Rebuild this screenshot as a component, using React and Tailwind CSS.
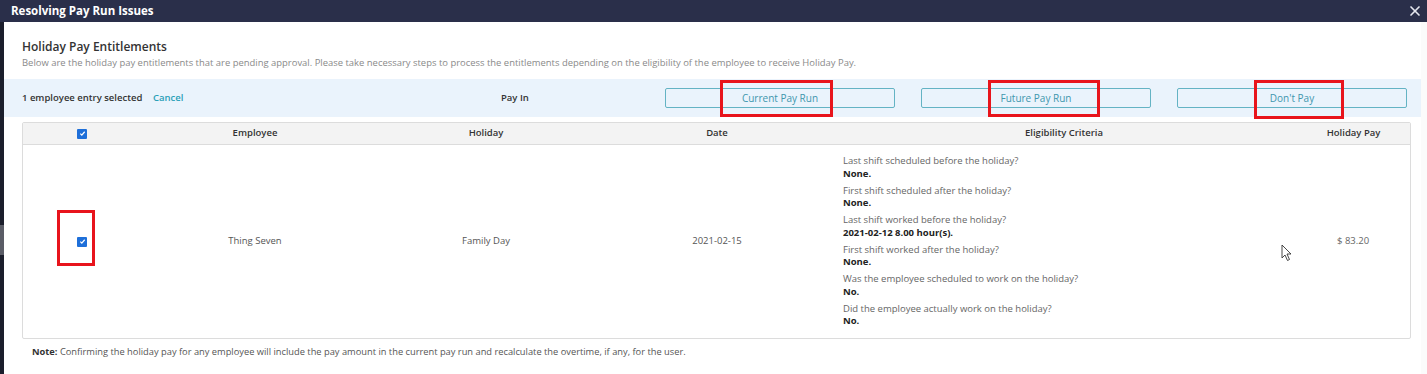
import React from 'react';
import { X } from 'lucide-react';

const criteria = [
  ['Last shift scheduled before the holiday?', 'None.'],
  ['First shift scheduled after the holiday?', 'None.'],
  ['Last shift worked before the holiday?', '2021-02-12 8.00 hour(s).'],
  ['First shift worked after the holiday?', 'None.'],
  ['Was the employee scheduled to work on the holiday?', 'No.'],
  ['Did the employee actually work on the holiday?', 'No.'],
];

const Check = () => (
  <span className="inline-flex h-[10px] w-[10px] items-center justify-center rounded-[1px] bg-[#1e6fd9]">
    <svg width="7" height="7" viewBox="0 0 8 8">
      <path d="M1.5 4.2 L3.2 5.8 L6.5 2" fill="none" stroke="white" strokeWidth="1.4" />
    </svg>
  </span>
);

const PayButton = ({ label, marked }) => (
  <div className="relative flex h-[20px] w-[230px] items-center justify-center rounded-[2px] border border-[#64b3c4] text-[10px] text-[#3f97ae]">
    {label}
    {marked && <span className={`absolute border-[3px] border-[#e8141c] ${marked}`} />}
  </div>
);

const App = () => {
  return (
    <div className="relative h-[374px] w-[1427px] overflow-hidden bg-[#1b1e2c] font-['Open_Sans',sans-serif]">
      {/* Header */}
      <div className="flex h-[22px] items-center justify-between bg-[#2a2f4a] pl-[11px] pr-[4px] text-white">
        <span className="text-[11.5px] font-bold">Resolving Pay Run Issues</span>
        <X size={16} strokeWidth={2.5} className="text-[#e5e7ef]" />
      </div>

      <div className="absolute left-0 top-[225px] h-[30px] w-[4px] bg-[#5a5c66]" />

      {/* Body */}
      <div className="ml-[4px] h-[352px] border-r-[6px] border-[#fbfbfb] bg-white">
        <div className="px-[18px] pt-[17px]">
          <h2 className="text-[12px] font-semibold leading-[16px] text-[#333]">Holiday Pay Entitlements</h2>
          <p className="mt-[1px] text-[9.45px] leading-[14px] text-[#8a8a8a]">
            Below are the holiday pay entitlements that are pending approval. Please take necessary steps to process the entitlements depending on the eligibility of the employee to receive Holiday Pay.
          </p>
        </div>

        {/* Selection bar */}
        <div className="mt-[9px] flex h-[38px] items-center bg-[#eaf3fc] pl-[18px] pr-[7px] text-[9.5px]">
          <span className="w-[131px] font-semibold text-[#333]">1 employee entry selected</span>
          <span className="w-[348px] font-semibold text-[#2aa0b8]">Cancel</span>
          <span className="w-[164px] font-semibold text-[#333]">Pay In</span>
          <div className="flex gap-[26px]">
            <PayButton label="Current Pay Run" marked="left-[54px] top-[-9px] h-[37px] w-[113px]" />
            <PayButton label="Future Pay Run" marked="left-[66px] top-[-9px] h-[37px] w-[112px]" />
            <PayButton label="Don't Pay" marked="left-[76px] top-[-9px] h-[39px] w-[90px]" />
          </div>
        </div>

        {/* Table */}
        <div className="ml-[18px] mr-[10px] mt-[5px] rounded-[2px] border border-[#dcdcdc] text-[9.5px]">
          <div className="flex h-[22px] items-center border-b border-[#dcdcdc] bg-[#f3f3f3] font-semibold text-[#333]">
            <div className="flex w-[118px] justify-center"><Check /></div>
            <div className="w-[228px] text-center">Employee</div>
            <div className="w-[234px] text-center">Holiday</div>
            <div className="w-[228px] text-center">Date</div>
            <div className="w-[466px] text-center">Eligibility Criteria</div>
            <div className="flex-1 text-center">Holiday Pay</div>
          </div>
          <div className="flex h-[193px] items-center text-[#555]">
            <div className="relative flex w-[118px] justify-center">
              <Check />
              <span className="absolute left-[34px] top-[-27px] h-[56px] w-[38px] border-[3px] border-[#e8141c]" />
            </div>
            <div className="w-[228px] text-center">Thing Seven</div>
            <div className="w-[234px] text-center">Family Day</div>
            <div className="w-[228px] text-center">2021-02-15</div>
            <div className="flex w-[466px] flex-col gap-[4.6px] pl-[12px]">
              {criteria.map(([q, a]) => (
                <div key={q} className="leading-[12.5px]">
                  <div className="text-[#666]">{q}</div>
                  <div className="font-bold text-[#222]">{a}</div>
                </div>
              ))}
            </div>
            <div className="relative flex-1 pl-[40px] text-[#666]">
              $ 83.20
              <svg className="absolute left-[-16px] top-[10px]" width="12" height="18" viewBox="0 0 12 18">
                <path d="M1 1 L1 14 L4 11 L6.5 16.5 L8.5 15.5 L6 10 L10 10 Z" fill="white" stroke="#333" strokeWidth="0.9" />
              </svg>
            </div>
          </div>
        </div>

        <p className="mt-[6px] pl-[28px] text-[9.3px] text-[#555]">
          <span className="font-bold text-[#333]">Note:</span> Confirming the holiday pay for any employee will include the pay amount in the current pay run and recalculate the overtime, if any, for the user.
        </p>
      </div>
    </div>
  );
};

export default App;
